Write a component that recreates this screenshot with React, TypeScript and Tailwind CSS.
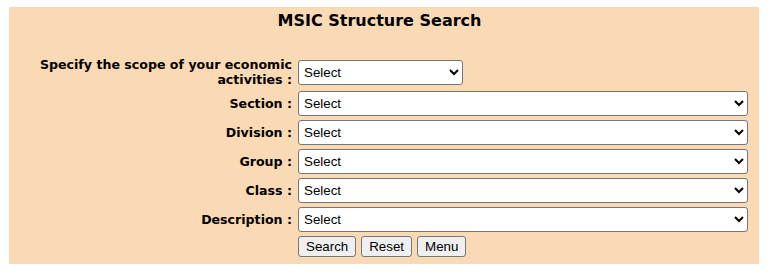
import React from "react";

const labelCls =
  "w-[283px] shrink-0 text-right font-bold text-[12.6px] leading-[15px] text-black [font-family:'DejaVu_Sans',Verdana,sans-serif]";
const selectCls =
  "h-[25px] border border-[#767676] rounded-[3px] bg-white text-black text-[13.33px] pl-[1px] [font-family:'Liberation_Sans',Arial,sans-serif]";
const btnCls =
  "h-[21px] px-[7px] border border-[#767676] rounded-[3px] bg-[#efefef] text-black text-[13.33px] leading-[17px] [font-family:'Liberation_Sans',Arial,sans-serif]";

function Row({ label }: { label: string }) {
  return (
    <div className="flex h-[29px] items-center">
      <div className={labelCls}>{label}</div>
      <select className={`${selectCls} ml-[6px] w-[450px]`} defaultValue="">
        <option value="">Select</option>
      </select>
    </div>
  );
}

export default function App() {
  return (
    <div className="bg-white pl-[9px] pt-[7px] min-h-[272px]">
      <div className="w-[750px] h-[257px] bg-[#fad9b5] flex flex-col">
        <div className="pt-[4px] pb-[26px] pr-[9px] text-center font-bold text-[16px] leading-[19px] text-black [font-family:'DejaVu_Sans',Verdana,sans-serif]">
          MSIC Structure Search
        </div>
        <div className="flex h-[32px] items-center">
          <div className={labelCls}>Specify the scope of your economic activities :</div>
          <select className={`${selectCls} ml-[6px] w-[165px]`} defaultValue="">
            <option value="">Select</option>
          </select>
        </div>
        <div className="pt-[1px] flex flex-col">
          <Row label="Section :" />
          <Row label="Division :" />
          <Row label="Group :" />
          <Row label="Class :" />
          <Row label="Description :" />
        </div>
        <div className="flex mt-[2px] pl-[289px] gap-[5px]">
          <button className={btnCls}>Search</button>
          <button className={btnCls}>Reset</button>
          <button className={btnCls}>Menu</button>
        </div>
      </div>
    </div>
  );
}
